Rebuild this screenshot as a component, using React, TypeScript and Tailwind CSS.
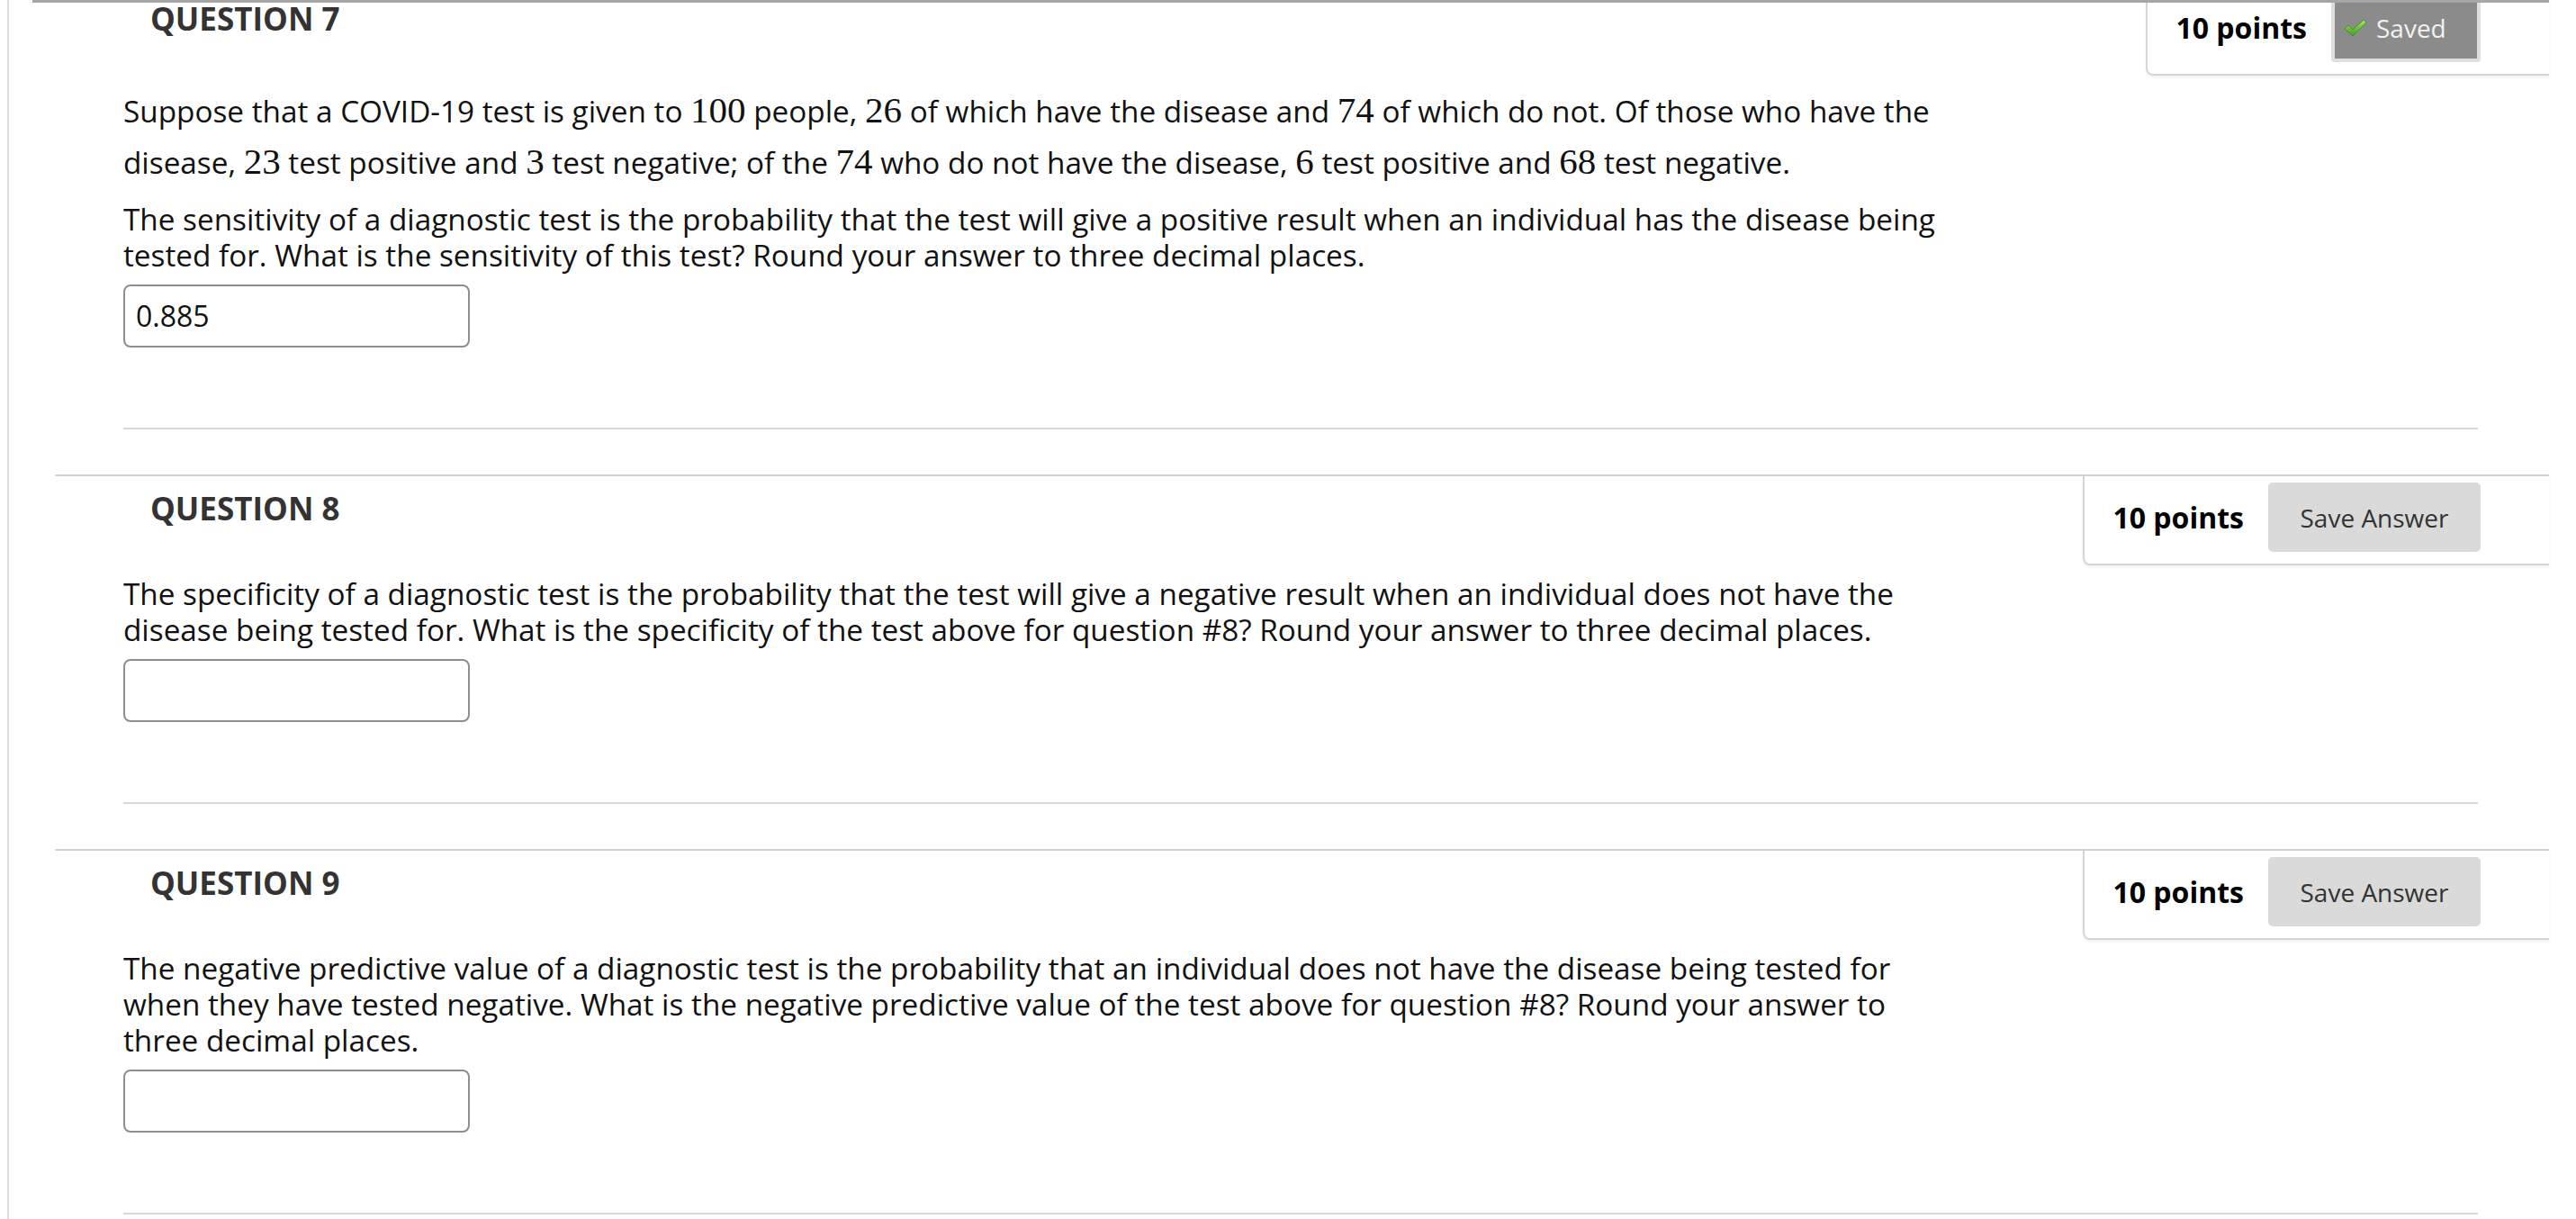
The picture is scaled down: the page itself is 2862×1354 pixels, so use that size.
import React from 'react';

const body = "font-['Open_Sans',sans-serif]";

function M({ children }: { children: React.ReactNode }) {
  return <span className="font-['Liberation_Serif',serif] text-[41px] leading-none">{children}</span>;
}

function SaveButton({ saved }: { saved?: boolean }) {
  if (saved) {
    return (
      <div className="flex h-[77px] w-[166px] items-center gap-[10px] rounded-b-[4px] border-4 border-[#dedede] bg-[#8b8b8b] pl-[10px] text-[28px] text-[#f2f2f2]">
        <svg width="26" height="20" viewBox="0 0 26 20">
          <defs>
            <linearGradient id="chk" x1="0" y1="0" x2="0" y2="1">
              <stop offset="0" stopColor="#a6e86a" />
              <stop offset="1" stopColor="#3f9e1c" />
            </linearGradient>
          </defs>
          <path d="M1 11 L5 7 L10 12 L22 1 L25 4 L10 19 Z" fill="url(#chk)" stroke="#3a8a1a" strokeWidth="0.8" />
        </svg>
        <span>Saved</span>
      </div>
    );
  }
  return (
    <button className="h-[77px] w-[236px] rounded-[5px] bg-[#dadada] text-[28px] text-[#333]">
      Save Answer
    </button>
  );
}

function Question({
  num,
  saved,
  answer,
  children,
}: {
  num: number;
  saved?: boolean;
  answer?: string;
  children: React.ReactNode;
}) {
  return (
    <section className="border-t-2 border-[#d3d3d3]">
      <div className="flex h-[99px] items-start justify-between">
        <h2 className="pl-[106px] pt-[14px] text-[35px] font-bold leading-[43px] text-[#333]">
          QUESTION {num}
        </h2>
        <div className="flex h-[99px] items-center gap-[27px] rounded-bl-[8px] border-b-2 border-l-2 border-[#d6d6d6] pb-[13px] pl-[31px] pr-[76px] pt-[7px] shadow-[0_2px_3px_rgba(0,0,0,0.06)]">
          <span className="text-[32px] font-bold text-black">10 points</span>
          <SaveButton saved={saved} />
        </div>
      </div>
      <div className="mt-[11px] px-[76px]">
        <div className="max-w-[2030px] text-[33.3px] text-[#111]">{children}</div>
        <div className="mt-[13px] flex h-[70px] w-[385px] items-center rounded-[8px] border-2 border-[#8e8e8e] pl-[12px] text-[32px] text-[#111]">
          {answer}
        </div>
        <div className="mb-[50px] mr-[3px] mt-[89px] h-[2px] bg-[#d8d8d8]" />
      </div>
    </section>
  );
}

export default function App() {
  return (
    <div className={`h-screen overflow-hidden bg-white pl-[8px] ${body}`}>
      <div className="h-full border-l-2 border-[#dcdcdc]">
        <div className="relative z-10 ml-[26px] mr-[30px] h-[3px] bg-[#a6a6a6]" />
        <div className="-mt-[20px] ml-[51px] mr-[30px]">
          <Question num={7} saved answer="0.885">
            <p className="leading-[57px]">
              Suppose that a COVID-19 test is given to <M>100</M> people, <M>26</M> of which have the disease and{' '}
              <M>74</M> of which do not. Of those who have the disease, <M>23</M> test positive and <M>3</M> test
              negative; of the <M>74</M> who do not have the disease, <M>6</M> test positive and <M>68</M> test
              negative.
            </p>
            <p className="mt-[14px] leading-[40px]">
              The sensitivity of a diagnostic test is the probability that the test will give a positive result when an
              individual has the disease being tested for. What is the sensitivity of this test? Round your answer to
              three decimal places.
            </p>
          </Question>
          <Question num={8}>
            <p className="leading-[40px]">
              The specificity of a diagnostic test is the probability that the test will give a negative result when an
              individual does not have the disease being tested for. What is the specificity of the test above for
              question #8? Round your answer to three decimal places.
            </p>
          </Question>
          <Question num={9}>
            <p className="leading-[40px]">
              The negative predictive value of a diagnostic test is the probability that an individual does not have the
              disease being tested for when they have tested negative. What is the negative predictive value of the test
              above for question #8? Round your answer to three decimal places.
            </p>
          </Question>
        </div>
      </div>
    </div>
  );
}
